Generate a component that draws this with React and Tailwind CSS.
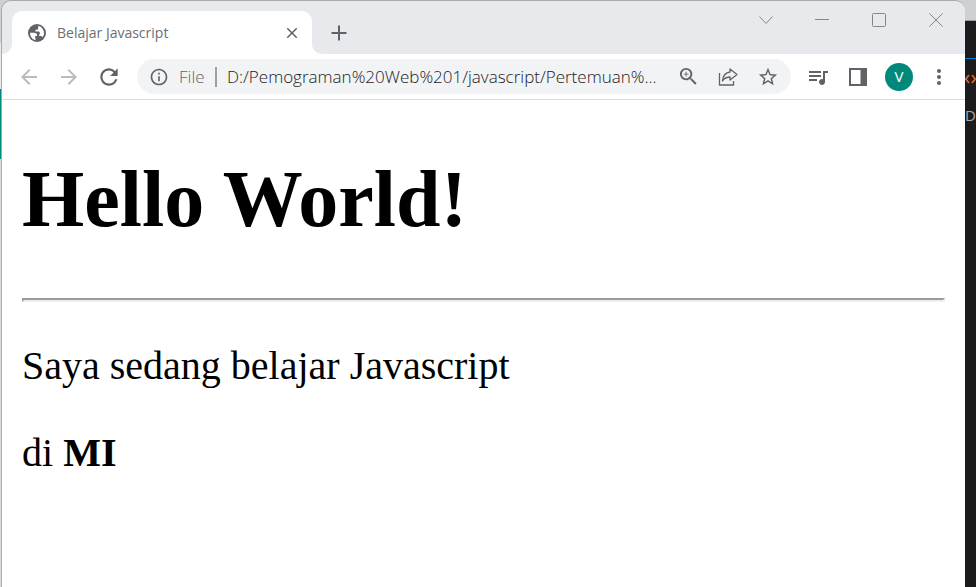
import React from "react";
import {
  MdArrowBack,
  MdArrowForward,
  MdClose,
  MdInfoOutline,
  MdQueueMusic,
  MdRefresh,
  MdStarBorder,
  MdZoomIn,
} from "react-icons/md";

function TabFoot({ flip }) {
  return (
    <svg
      width="10"
      height="10"
      viewBox="0 0 10 10"
      className={flip ? "shrink-0 -scale-x-100" : "shrink-0"}
      aria-hidden="true"
    >
      <path d="M0 10A10 10 0 0 0 10 0V10Z" fill="#fff" />
    </svg>
  );
}

function Globe() {
  return (
    <svg width="18" height="18" viewBox="0 0 18 18" className="mx-0.5 shrink-0" aria-hidden="true">
      <circle cx="9" cy="9" r="9" fill="#5f6368" />
      <path
        d="M2 8.800H5.800C7.600 8.800 9 9.600 9 11V12H7.200V13C7.200 14 7.600 14.600 7.600 16C4.200 15.500 2 12.500 2 8.800Z"
        fill="#fff"
      />
      <path
        d="M10.200 2.100C13.600 2.700 16 5.600 16 9C16 10.600 15.500 12 14.600 13.100C14 12.300 13.300 12 12.300 12H11.200V10.400L12 9.200C12 8.200 11.200 7.600 10.200 7.600H7.400V5.700H8.600C9.600 5.700 10.200 5 10.200 4.200Z"
        fill="#fff"
      />
    </svg>
  );
}

function IconButton({ label, className = "", children }) {
  return (
    <button
      type="button"
      aria-label={label}
      className={`flex h-8 shrink-0 items-center justify-center text-[#5f6368] ${className}`}
    >
      {children}
    </button>
  );
}

function WindowControls() {
  const line = { fill: "none", stroke: "#85868a", strokeWidth: 1 };
  return (
    <div className="flex h-[37px] items-center pr-px">
      <IconButton label="Search tabs" className="w-14">
        <svg width="14" height="14" viewBox="0 0 14 14" {...line}>
          <path d="M.5 3.5 7 10.5 13.5 3.5" />
        </svg>
      </IconButton>
      <IconButton label="Minimize" className="w-14">
        <svg width="14" height="14" viewBox="0 0 14 14" {...line}>
          <path d="M0 6.5H14" />
        </svg>
      </IconButton>
      <IconButton label="Maximize" className="w-[58px]">
        <svg width="14" height="14" viewBox="0 0 14 14" {...line}>
          <rect x=".5" y=".5" width="13" height="13" rx="1" />
        </svg>
      </IconButton>
      <IconButton label="Close window" className="w-14">
        <svg width="14" height="14" viewBox="0 0 14 14" {...line}>
          <path d="M.5.5 13.5 13.5M13.5.5.5 13.5" />
        </svg>
      </IconButton>
    </div>
  );
}

function TabStrip() {
  return (
    <div className="flex h-[53px] items-start bg-[#e8e9ed]">
      <div className="flex h-full items-end">
        <TabFoot />
        <div className="flex h-[43px] w-[300px] items-center rounded-t-[10px] bg-white pr-2.5 pl-[14px]">
          <Globe />
          <span className="ml-[9px] flex-1 truncate text-[14px] text-[#6b6f73]">
            Belajar Javascript
          </span>
          <IconButton label="Close tab" className="w-5">
            <MdClose className="size-[18px]" />
          </IconButton>
        </div>
        <TabFoot flip />
      </div>
      <div className="flex h-full flex-1 items-center pt-[10px] pl-2">
        <IconButton label="New tab" className="w-[18px]">
          <svg width="16" height="16" viewBox="0 0 16 16" stroke="currentColor" strokeWidth="2">
            <path d="M8 .5V15.5M.5 8H15.5" />
          </svg>
        </IconButton>
      </div>
      <WindowControls />
    </div>
  );
}

function AddressBar() {
  return (
    <div className="ml-2 flex h-[35px] min-w-0 flex-1 items-center rounded-full bg-[#f1f3f4] pr-[3px] pl-3">
      <MdInfoOutline className="size-5 shrink-0 text-[#5f6368]" />
      <label htmlFor="address" className="ml-[10px] w-9 text-[17px] font-[350] text-[#5f6368]">
        File
      </label>
      <span className="h-5 w-0.5 bg-[#9aa0a6]" />
      <input
        id="address"
        type="text"
        defaultValue="D:/Pemograman%20Web%201/javascript/Pertemuan%..."
        className="ml-[10px] min-w-0 flex-1 bg-transparent text-[17px] font-[350] text-[#202124] outline-none"
      />
      <IconButton label="Zoom" className="w-10">
        <MdZoomIn className="size-[23px]" />
      </IconButton>
      <IconButton label="Share" className="w-10">
        <svg width="20" height="20" viewBox="0 0 20 20" fill="none" stroke="currentColor" strokeWidth="1.3">
          <path d="M1.500 6V18H15.500V14" />
          <path d="M12 2 19 7.500 12 13V10C9 10 6.500 11 4.500 14C5 9 7.500 5.500 12 5Z" strokeLinejoin="round" />
        </svg>
      </IconButton>
      <IconButton label="Bookmark this tab" className="w-10">
        <MdStarBorder className="size-[22px]" />
      </IconButton>
    </div>
  );
}

function Toolbar() {
  return (
    <div className="flex h-[46px] items-center border-b border-[#dadce0] bg-white pr-[7px] pl-[7px]">
      <IconButton label="Back" className="w-10">
        <MdArrowBack className="size-[24px] text-[#babcbe]" />
      </IconButton>
      <IconButton label="Forward" className="w-10">
        <MdArrowForward className="size-[24px] text-[#babcbe]" />
      </IconButton>
      <IconButton label="Reload" className="w-10">
        <MdRefresh className="size-[26px]" />
      </IconButton>
      <AddressBar />
      <IconButton label="Media controls" className="ml-[7px] w-10">
        <MdQueueMusic className="size-6" />
      </IconButton>
      <IconButton label="Side panel" className="w-10">
        <svg width="18" height="18" viewBox="0 0 18 18" fill="currentColor">
          <path fillRule="evenodd" d="M0 0H18V18H0ZM2 2V16H11.500V2Z" />
        </svg>
      </IconButton>
      <IconButton label="Profile" className="w-[42px]">
        <span className="flex size-7 items-center justify-center rounded-full bg-[#00897b] text-[15px] text-white">
          V
        </span>
      </IconButton>
      <IconButton label="Menu" className="w-[38px]">
        <svg width="4" height="16" viewBox="0 0 4 16" fill="currentColor">
          <circle cx="2" cy="2" r="2" />
          <circle cx="2" cy="8" r="2" />
          <circle cx="2" cy="14" r="2" />
        </svg>
      </IconButton>
    </div>
  );
}

function Page() {
  return (
    <main className="flex-1 bg-white px-5 pt-[53px] font-['Liberation_Serif',serif] text-black">
      <h1 className="text-[80px] leading-[92px] font-bold">Hello World!</h1>
      <hr className="mt-[53px] mb-10 h-1 border-2 border-t-[#9a9a9a] border-r-[#eeeeee] border-b-[#eeeeee] border-l-[#9a9a9a]" />
      <p className="mb-10 text-[40px] leading-[47px]">Saya sedang belajar Javascript</p>
      <p className="text-[40px] leading-[47px]">
        di <b>MI</b>
      </p>
    </main>
  );
}

function LeftEdge() {
  return (
    <div className="flex w-px shrink-0 flex-col">
      <div className="h-[43px] bg-[#cfd0d2]" />
      <div className="h-[46px] bg-[#e9e9e9]" />
      <div className="h-[70px] bg-[#00897b]" />
      <div className="flex-1 bg-[#dcdcdc]" />
    </div>
  );
}

function EditorEdge() {
  return (
    <div className="flex w-[11px] shrink-0 flex-col overflow-hidden">
      <div className="h-5 bg-[#cfd0d2]" />
      <div className="flex flex-1 flex-col border-t border-[#9b9b9b] bg-[#1c1c1c]">
        <div className="mt-[37px] h-px bg-[#0078d4]" />
        <svg className="mt-[14px]" width="11" height="12" viewBox="0 0 11 12" fill="none" stroke="#e0622b" strokeWidth="1.8">
          <path d="M4 2 .8 6 4 10M7 2 10.200 6 7 10" />
        </svg>
        <span className="mt-5 text-[15px] leading-[20px] text-[#a9a9a9]">D</span>
      </div>
    </div>
  );
}

export default function App() {
  return (
    <div className="flex min-h-screen bg-[#cfd0d2] font-['Open_Sans','Noto_Sans',sans-serif]">
      <LeftEdge />
      <div className="flex min-w-0 flex-1 flex-col overflow-hidden rounded-t-[10px] border-t border-l border-[#a9aaac]">
        <TabStrip />
        <Toolbar />
        <Page />
      </div>
      <EditorEdge />
    </div>
  );
}
